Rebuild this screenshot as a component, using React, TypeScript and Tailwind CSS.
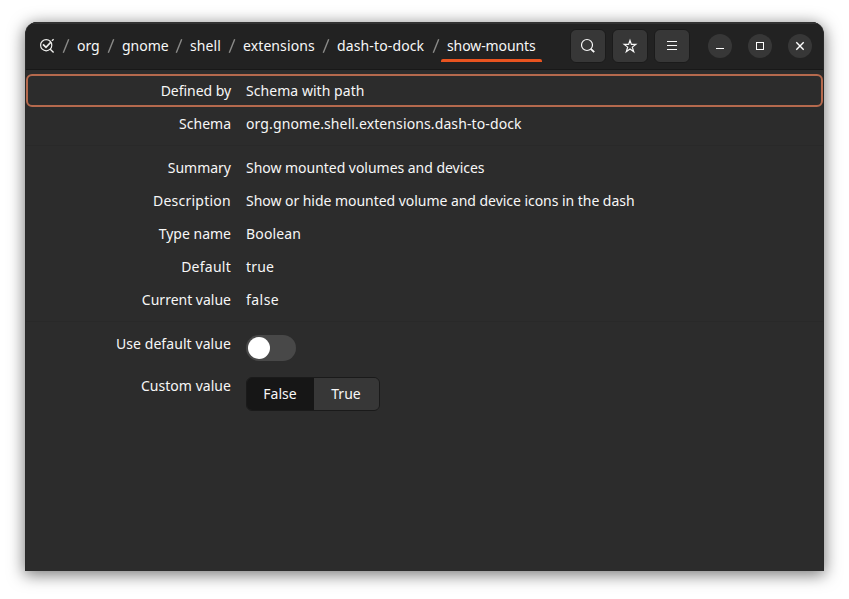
import type { ReactNode } from 'react';

function Separator() {
  return (
    <span className="flex w-[22px] shrink-0 justify-center">
      <svg width="8" height="16" viewBox="0 0 8 16" className="mt-px">
        <path d="M6.7 1.2 1.3 14.8" stroke="#8b8b89" strokeWidth="1.4" fill="none" />
      </svg>
    </span>
  );
}

function Crumb({ width, children }: { width: string; children: ReactNode }) {
  return <span className={`${width} shrink-0 whitespace-nowrap`}>{children}</span>;
}

function HeaderButton({ label, children }: { label: string; children: ReactNode }) {
  return (
    <button
      aria-label={label}
      className="flex h-[34px] w-9 items-center justify-center rounded-md border border-[#1b1b1b] bg-[#373737]"
    >
      {children}
    </button>
  );
}

function WindowButton({ label, children }: { label: string; children: ReactNode }) {
  return (
    <button aria-label={label} className="flex size-6 items-center justify-center rounded-full bg-[#373737]">
      {children}
    </button>
  );
}

function Row({
  label,
  value,
  labelStyle = '',
  valueStyle = '',
}: {
  label: string;
  value: string;
  labelStyle?: string;
  valueStyle?: string;
}) {
  return (
    <div className="flex h-[33px] items-center">
      <span className={`w-[205px] text-right ${labelStyle}`}>{label}</span>
      <span className={`ml-[15px] whitespace-nowrap ${valueStyle}`}>{value}</span>
    </div>
  );
}

export default function App() {
  return (
    <div className="h-[599px] w-[849px] overflow-hidden bg-white pt-[22px] pl-[25px] font-['Noto_Sans',sans-serif] text-[14px] leading-[20px] text-[#f7f7f7]">
      <div className="h-[549px] w-[799px] overflow-hidden rounded-t-[12px] border-x border-[#292929] bg-[#2c2c2c] shadow-[0_3px_16px_1px_rgba(0,0,0,0.52)]">
        <header className="flex h-12 items-center border-t-2 border-b border-t-[#323232] border-b-[#181818] bg-[#222222] pb-[2px] pl-[13px]">
          <svg width="16" height="16" viewBox="0 0 16 16" fill="none" stroke="#eeeeec" className="shrink-0">
            <circle cx="7.2" cy="7.2" r="5.6" strokeWidth="1.2" />
            <path d="m4 6.3 3 3 5-5.3" strokeWidth="1.8" />
            <path d="m11 11 3.6 3.4M12.9 2.7l1.7-1.5" strokeWidth="1.4" />
          </svg>
          <Separator />
          <Crumb width="w-[23px]">org</Crumb>
          <Separator />
          <Crumb width="w-[46px]">gnome</Crumb>
          <Separator />
          <Crumb width="w-[31px] tracking-[0.1px]">shell</Crumb>
          <Separator />
          <Crumb width="w-[72px] tracking-[0.1px]">extensions</Crumb>
          <Separator />
          <Crumb width="w-[88px] tracking-[0.13px]">dash-to-dock</Crumb>
          <Separator />
          <span className="relative w-[89px] shrink-0 whitespace-nowrap tracking-[-0.1px]">
            show-mounts
            <span className="absolute top-[23px] -left-[6px] h-[3px] w-[101px] rounded-t-[2px] bg-[#e95420]" />
          </span>
          <div className="ml-[34px] flex shrink-0 gap-[6px]">
            <HeaderButton label="Search">
              <svg width="16" height="16" viewBox="0 0 16 16" fill="none" stroke="#f7f7f7">
                <circle cx="7" cy="7" r="5.5" strokeWidth="1.2" />
                <path d="m10.8 10.8 3.4 3.4" strokeWidth="1.9" />
              </svg>
            </HeaderButton>
            <HeaderButton label="Bookmark">
              <svg width="16" height="16" viewBox="0 0 16 16" fill="none" stroke="#f7f7f7">
                <path d="m8 2.4 1.4 4h4.4l-3.5 2.7 1.4 4.5L8 10.9l-3.7 2.7 1.4-4.5-3.5-2.7h4.4z" strokeWidth="1.2" />
              </svg>
            </HeaderButton>
            <HeaderButton label="Menu">
              <svg width="16" height="16" viewBox="0 0 16 16" fill="none" stroke="#f7f7f7">
                <path d="M3 3.5h10M3 7.5h10M3 11.5h10" />
              </svg>
            </HeaderButton>
          </div>
          <div className="ml-[18px] flex shrink-0 gap-4">
            <WindowButton label="Minimize">
              <svg width="16" height="16" viewBox="0 0 16 16"><path d="M4 10.5h8" stroke="#fff" /></svg>
            </WindowButton>
            <WindowButton label="Maximize">
              <svg width="16" height="16" viewBox="0 0 16 16"><rect x="4.5" y="4.5" width="7" height="7" stroke="#fff" fill="none" /></svg>
            </WindowButton>
            <WindowButton label="Close">
              <svg width="16" height="16" viewBox="0 0 16 16"><path d="m4.3 4.3 7.4 7.4m0-7.4-7.4 7.4" stroke="#fff" strokeWidth="1.4" /></svg>
            </WindowButton>
          </div>
        </header>
        <main>
          <section className="h-[76px] border-b border-[#292929] pt-1">
            <div className="h-[33px] rounded-md outline-2 -outline-offset-2 outline-[#b5694d]">
              <Row label="Defined by" value="Schema with path" labelStyle="tracking-[-0.05px]" valueStyle="tracking-[0.05px]" />
            </div>
            <Row label="Schema" value="org.gnome.shell.extensions.dash-to-dock" valueStyle="tracking-[0.11px]" />
          </section>
          <section className="h-[176px] border-b border-[#292929] pt-[5px]">
            <Row label="Summary" value="Show mounted volumes and devices" valueStyle="tracking-[-0.03px]" />
            <Row
              label="Description"
              value="Show or hide mounted volume and device icons in the dash"
              labelStyle="tracking-[0.25px]"
              valueStyle="tracking-[-0.04px]"
            />
            <Row label="Type name" value="Boolean" valueStyle="tracking-[0.16px]" />
            <Row label="Default" value="true" labelStyle="tracking-[0.25px]" valueStyle="tracking-[0.2px]" />
            <Row label="Current value" value="false" valueStyle="tracking-[0.45px]" />
          </section>
          <section className="pt-3">
            <div className="flex h-[42px]">
              <span className="w-[205px] text-right tracking-[0.08px]">Use default value</span>
              <button aria-label="Use default value" className="mt-px ml-[15px] flex h-[26px] w-[50px] items-center rounded-full bg-[#484848] pl-[2px]">
                <span className="size-[22px] rounded-full bg-white" />
              </button>
            </div>
            <div className="flex">
              <span className="w-[205px] text-right tracking-[0.04px]">Custom value</span>
              <div className="mt-px ml-[15px] flex h-[34px] w-[134px] overflow-hidden rounded-md border border-[#1a1a1a]">
                <button className="w-[67px] bg-[#161616] pr-px">False</button>
                <button className="w-[65px] bg-[#373737] pr-px">True</button>
              </div>
            </div>
          </section>
        </main>
      </div>
    </div>
  );
}
